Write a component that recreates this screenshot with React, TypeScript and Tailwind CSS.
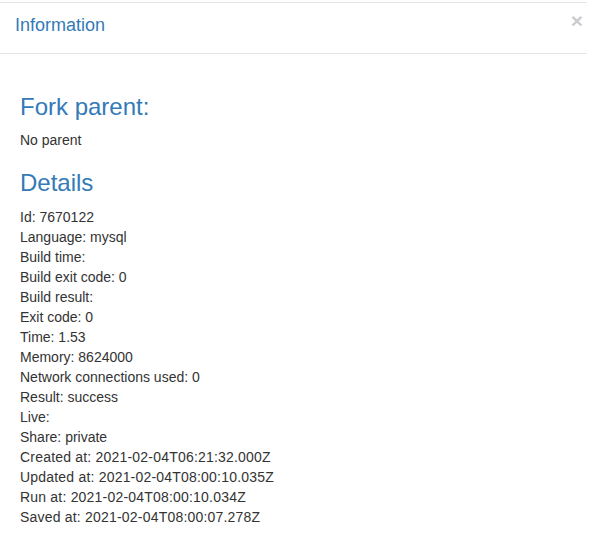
import React from "react";

const rows = [
  "Id: 7670122",
  "Language: mysql",
  "Build time:",
  "Build exit code: 0",
  "Build result:",
  "Exit code: 0",
  "Time: 1.53",
  "Memory: 8624000",
  "Network connections used: 0",
  "Result: success",
  "Live:",
  "Share: private",
  "Created at: 2021-02-04T06:21:32.000Z",
  "Updated at: 2021-02-04T08:00:10.035Z",
  "Run at: 2021-02-04T08:00:10.034Z",
  "Saved at: 2021-02-04T08:00:07.278Z",
];

export default function App() {
  return (
    <div
      className="w-[589px] h-[540px] bg-white pt-[2px] text-[14px] leading-[20px] text-[#333333] overflow-hidden"
      style={{ fontFamily: '"Liberation Sans", Arial, sans-serif' }}
    >
      <div className="w-[587px] border-t border-[#e5e5e5]">
        <div className="relative flex items-start justify-between pl-[15px] pr-[4px] pt-[9px] pb-[15px] border-b border-[#e5e5e5]">
          <h4 className="m-0 text-[18px] leading-[26px] text-[#337ab7] font-normal">
            Information
          </h4>
          <button
            type="button"
            className="text-[21px] leading-[21px] font-bold text-black opacity-20 -mt-[2px] bg-transparent border-0 p-0"
          >
            ×
          </button>
        </div>
        <div className="px-[20px] pt-[20px]">
          <h3 className="mt-[20px] mb-[10px] text-[24px] leading-[1.1] font-normal text-[#337ab7]">
            Fork parent:
          </h3>
          <div>No parent</div>
          <h3 className="mt-[20px] mb-[10px] text-[24px] leading-[1.1] font-normal text-[#337ab7]">
            Details
          </h3>
          <div className="flex flex-col">
            {rows.map((r) => (
              <div key={r} className={/\d{4}-/.test(r) ? "tracking-[0.2px]" : ""}>
                {r}
              </div>
            ))}
          </div>
        </div>
      </div>
    </div>
  );
}
